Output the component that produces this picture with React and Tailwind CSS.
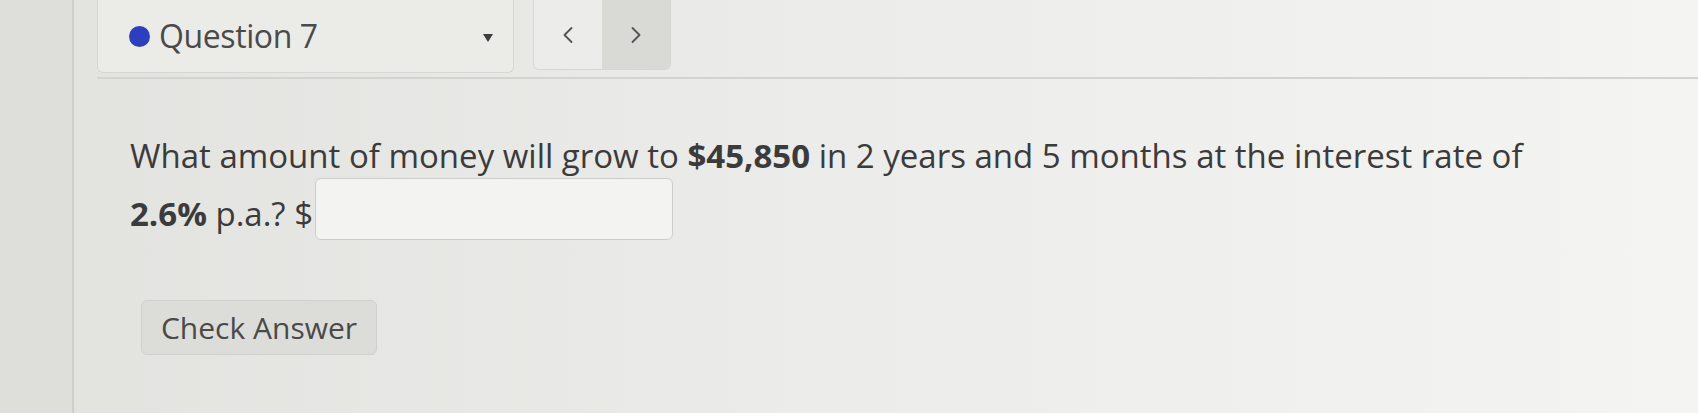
import { ChevronLeft, ChevronRight } from "lucide-react";

export default function App() {
  return (
    <div
      className="flex h-[413px] w-[1698px] overflow-hidden bg-gradient-to-r from-[#e2e2df] via-[#ececea] to-[#f4f4f2] text-[#3b3b3b]"
      style={{ fontFamily: '"Open Sans", "Noto Sans", sans-serif' }}
    >
      <div className="h-full w-[74px] shrink-0 border-r-2 border-[#cfcfcc] bg-[#dededb]" />
      <div className="flex min-w-0 flex-1 flex-col">
        <div className="flex items-start gap-[19px] pl-[23px]">
          <div className="flex h-[73px] w-[417px] items-center rounded-b-md border border-t-0 border-[#d6d6d3] bg-[#ebebe8] pl-[31px] pr-[20px]">
            <span className="h-[21px] w-[21px] rounded-full bg-[#2b3fbf]" />
            <span className="ml-[9px] text-[32px] leading-none tracking-[-0.4px] text-[#4a4a4a]">
              Question 7
            </span>
            <span className="ml-auto mt-[4px] h-0 w-0 border-x-[5px] border-t-[8px] border-x-transparent border-t-[#3e3e3e]" />
          </div>
          <div className="flex h-[70px] w-[138px] overflow-hidden rounded-b-md border border-t-0 border-[#d6d6d3]">
            <div className="flex w-[68px] items-center justify-center bg-[#ececea] text-[#555]">
              <ChevronLeft size={28} strokeWidth={1.6} />
            </div>
            <div className="flex flex-1 items-center justify-center bg-[#d9d9d6] text-[#555]">
              <ChevronRight size={28} strokeWidth={1.6} />
            </div>
          </div>
        </div>
        <div className="ml-[23px] mt-[4px] h-[2px] bg-[#d3d3d0]" />

        <div className="pl-[56px] pt-[49px]">
          <p className="text-[33px] leading-[56px]">
            What amount of money will grow to <b className="font-bold">$45,850</b> in 2 years and 5 months at the
            interest rate of
          </p>
          <div className="-mt-[6px] flex items-center">
            <span className="pt-[8px] text-[33px] leading-none">
              <b className="font-bold">2.6%</b> p.a.? $
            </span>
            <input
              type="text"
              className="ml-[2px] h-[62px] w-[358px] rounded-md border border-[#cdcdca] bg-[#f3f3f1] outline-none"
            />
          </div>
          <button className="ml-[11px] mt-[60px] h-[55px] w-[236px] rounded-md border border-[#d0d0cd] bg-[#dcdcd9] text-[30px] leading-none text-[#4a4a4a]">
            Check Answer
          </button>
        </div>
      </div>
    </div>
  );
}
